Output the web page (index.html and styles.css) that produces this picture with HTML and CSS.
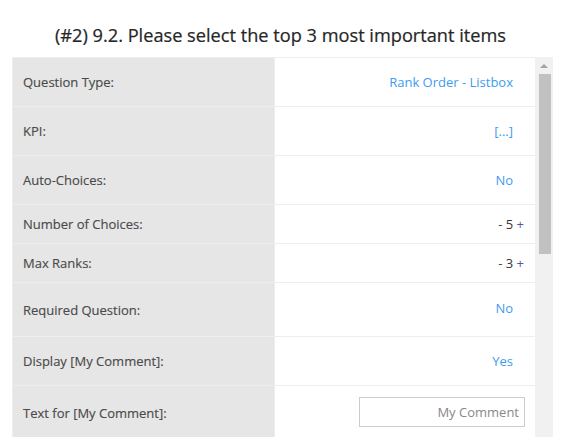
FILE: index.html
```html
<!DOCTYPE html>
<html>
<head>
<meta charset="utf-8">
<link rel="stylesheet" href="styles.css">
</head>
<body>
<h1 class="title">(#2) 9.2. Please select the top 3 most important items</h1>
<div class="panel">
  <div class="grid">
    <div class="row row-md">
      <div class="label">Question Type:</div>
      <div class="value"><span class="link">Rank Order - Listbox</span></div>
    </div>
    <div class="row row-md">
      <div class="label">KPI:</div>
      <div class="value"><span class="link">[...]</span></div>
    </div>
    <div class="row row-md">
      <div class="label">Auto-Choices:</div>
      <div class="value"><span class="link">No</span></div>
    </div>
    <div class="row row-sm">
      <div class="label">Number of Choices:</div>
      <div class="value value-stepper"><span class="stepper"><span class="minus">-</span> <span class="num">5</span> <span class="plus">+</span></span></div>
    </div>
    <div class="row row-sm">
      <div class="label">Max Ranks:</div>
      <div class="value value-stepper"><span class="stepper"><span class="minus">-</span> <span class="num">3</span> <span class="plus">+</span></span></div>
    </div>
    <div class="row row-lg">
      <div class="label">Required Question:</div>
      <div class="value"><span class="link link-up">No</span></div>
    </div>
    <div class="row row-md">
      <div class="label">Display [My Comment]:</div>
      <div class="value"><span class="link">Yes</span></div>
    </div>
    <div class="row row-lg">
      <div class="label">Text for [My Comment]:</div>
      <div class="value value-input"><input class="text-input" type="text" placeholder="My Comment"></div>
    </div>
  </div>
  <div class="scrollbar">
    <div class="arrow-box"><div class="arrow"></div></div>
    <div class="thumb"></div>
  </div>
</div>
</body>
</html>
```
FILE: styles.css
```css
html, body {
  margin: 0;
  padding: 0;
  background: #ffffff;
  overflow: hidden;
}
body {
  font-family: "Open Sans", "Noto Sans", sans-serif;
  width: 561px;
  height: 437px;
}
.title {
  margin: 0;
  padding: 23px 0 10px;
  height: 24px;
  font-size: 18.2px;
  line-height: 24px;
  font-weight: 400;
  color: #262626;
  text-align: center;
  -webkit-text-stroke: 0.2px #262626;
}
.panel {
  display: flex;
  margin-left: 12px;
  width: 541px;
  height: 380px;
  overflow: hidden;
}
.grid {
  width: 523px;
  border-top: 1px solid #eeeeee;
  border-left: 1px solid #eeeeee;
  box-sizing: border-box;
  flex: none;
}
.row {
  display: grid;
  grid-template-columns: 261px 261px;
  border-bottom: 1px solid #eeeeee;
}
.row-md { height: 48px; }
.row-sm { height: 38px; }
.row-lg { height: 53px; }
.label {
  background: #e6e6e6;
  color: #4a4a4a;
  font-size: 13px;
  line-height: 18px;
  padding-left: 10px;
  display: flex;
  align-items: center;
  -webkit-text-stroke: 0.15px #4a4a4a;
}
.value {
  background: #ffffff;
  border-left: 1px solid #eeeeee;
  display: flex;
  align-items: center;
  justify-content: flex-end;
  padding-right: 22px;
  font-size: 13px;
  line-height: 18px;
}
.link {
  color: #3d9cf0;
}
.link-up {
  position: relative;
  top: -2px;
}
.value-stepper {
  padding-right: 11px;
}
.stepper {
  white-space: pre;
  color: #333333;
}
.minus { color: #444444; }
.num { color: #333333; }
.plus { color: #5a55a0; }
.value-input {
  padding-right: 10px;
}
.text-input {
  box-sizing: border-box;
  width: 166px;
  height: 30px;
  border: 1px solid #cccccc;
  border-radius: 0;
  padding: 0 5px;
  margin: 0;
  font-family: "Open Sans", "Noto Sans", sans-serif;
  font-size: 13px;
  text-align: right;
  outline: none;
  position: relative;
  top: -1px;
}
.text-input::placeholder {
  color: #888888;
  opacity: 1;
}
.scrollbar {
  width: 18px;
  background: #f1f1f1;
  display: flex;
  flex-direction: column;
  flex: none;
}
.arrow-box {
  height: 17px;
  display: flex;
  justify-content: center;
}
.arrow {
  margin-top: 7px;
  width: 0;
  height: 0;
  border-left: 4px solid transparent;
  border-right: 4px solid transparent;
  border-bottom: 4px solid #a3a3a3;
}
.thumb {
  margin: 0 2px 0 4px;
  height: 180px;
  background: #c1c1c1;
}
```
